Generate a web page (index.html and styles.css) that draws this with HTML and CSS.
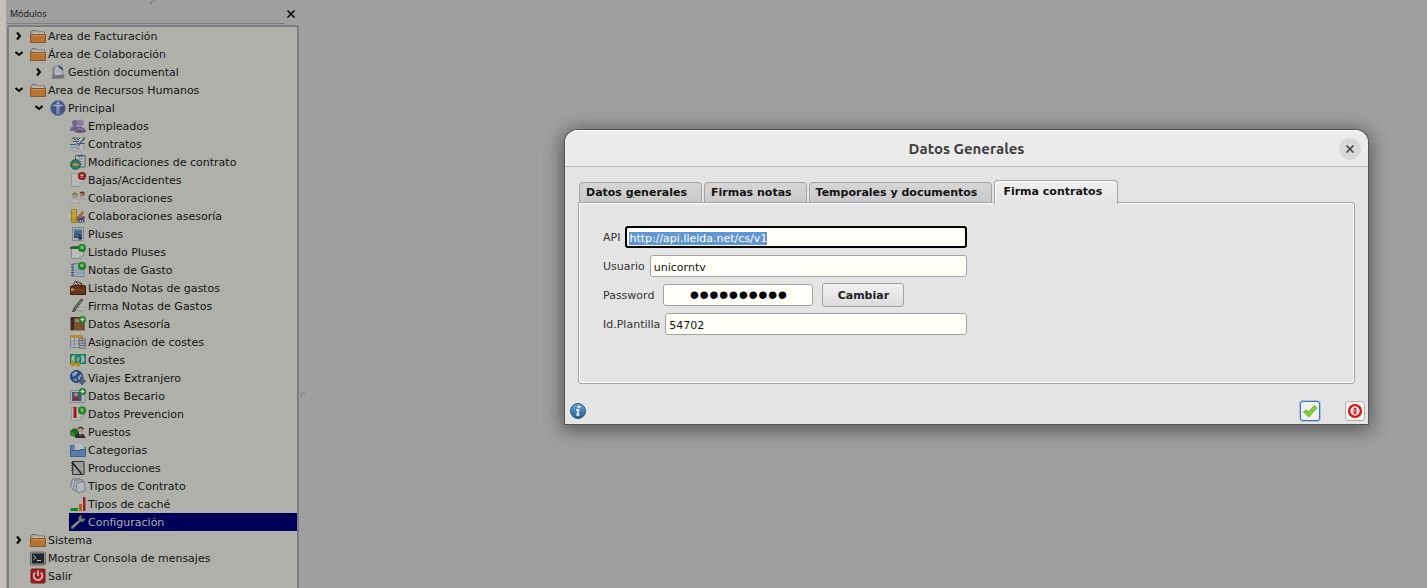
FILE: index.html
```html
<!DOCTYPE html>
<html lang="es">
<head>
<meta charset="utf-8">
<title>Datos Generales</title>
<link rel="stylesheet" href="styles.css">
</head>
<body>
<aside class="dock">
  <header class="dock-head">
    <h2 class="dock-title">Módulos</h2>
    <button class="dock-close" type="button" aria-label="Cerrar"><svg width="10" height="10" viewBox="0 0 10 10"><path d="M1.500 1.500L8.500 8.500M8.500 1.500L1.500 8.500" stroke="#000" stroke-width="1.500" fill="none"/></svg></button>
    <svg class="grip grip-top" width="6" height="6" viewBox="0 0 6 6"><path d="M1 5V2Q2 .5 5 1" stroke="#777" fill="none"/></svg>
  </header>
  <ul class="tree">
    <li>
      <div class="row"><button class="twisty" type="button" aria-label="Expandir"><svg viewBox="0 0 10 10"><path d="M3 1.500L6 5L3 8.500" class="chev"/></svg></button><button class="item" type="button"><svg viewBox="0 0 16 16"><path d="M1 13V3.500L2 2.500H6L7.500 4H14.500V7" fill="#a5a6a1" stroke="#6f706d"/><path d="M3 4.500H14V6H3z" fill="#bcbdb8"/><path d="M.5 6.500H15.500V14.500H.5z" fill="#b87435" stroke="#8f5420"/><path d="M1 7.500H15" stroke="#c98d55"/></svg>Area de Facturación</button></div>
    </li>
    <li>
      <div class="row"><button class="twisty" type="button" aria-label="Contraer"><svg viewBox="0 0 10 10"><path d="M1.500 3L5 6L8.500 3" class="chev"/></svg></button><button class="item" type="button"><svg viewBox="0 0 16 16"><path d="M1 13V3.500L2 2.500H6L7.500 4H14.500V7" fill="#a5a6a1" stroke="#6f706d"/><path d="M3 4.500H14V6H3z" fill="#bcbdb8"/><path d="M.5 6.500H15.500V14.500H.5z" fill="#b87435" stroke="#8f5420"/><path d="M1 7.500H15" stroke="#c98d55"/></svg>Área de Colaboración</button></div>
      <ul>
        <li><div class="row"><button class="twisty" type="button" aria-label="Expandir"><svg viewBox="0 0 10 10"><path d="M3 1.500L6 5L3 8.500" class="chev"/></svg></button><button class="item" type="button"><svg viewBox="0 0 16 16"><path d="M2 4L5 2.500V13H2z" fill="#8a8b8a"/><path d="M5 2L10 1L13 4V12H5z" fill="#a9afb4" stroke="#7e8283" stroke-width=".7"/><path d="M8 1.500L12.500 3.500V7L9 4z" fill="#24497c"/><circle cx="8" cy="7.500" r="3" fill="#a7b1b8" stroke="#c4c6c3"/><path d="M2 11.500L14 10.500L14.500 14.500L2 15z" fill="#747472"/></svg>Gestión documental</button></div></li>
      </ul>
    </li>
    <li>
      <div class="row"><button class="twisty" type="button" aria-label="Contraer"><svg viewBox="0 0 10 10"><path d="M1.500 3L5 6L8.500 3" class="chev"/></svg></button><button class="item" type="button"><svg viewBox="0 0 16 16"><path d="M1 13V3.500L2 2.500H6L7.500 4H14.500V7" fill="#a5a6a1" stroke="#6f706d"/><path d="M3 4.500H14V6H3z" fill="#bcbdb8"/><path d="M.5 6.500H15.500V14.500H.5z" fill="#b87435" stroke="#8f5420"/><path d="M1 7.500H15" stroke="#c98d55"/></svg>Area de Recursos Humanos</button></div>
      <ul>
        <li>
          <div class="row"><button class="twisty" type="button" aria-label="Contraer"><svg viewBox="0 0 10 10"><path d="M1.500 3L5 6L8.500 3" class="chev"/></svg></button><button class="item" type="button"><svg viewBox="0 0 16 16"><circle cx="8" cy="8" r="7.500" fill="#41528a" stroke="#75809f"/><path d="M2 6Q8 0 14 6Q9 8 2 6" fill="#6677a0"/><circle cx="8" cy="3" r="1.300" fill="#a5abbd"/><path d="M3.500 5.500H12.500M8 5V9M7 6V14M9 6V14" stroke="#a5abbd"/></svg>Principal</button></div>
          <ul>
            <li><div class="row leaf"><button class="item" type="button"><svg viewBox="0 0 16 16"><circle cx="5" cy="5" r="3" fill="#70658f"/><path d="M0 13Q0 8 5 8T9 13z" fill="#70658f"/><circle cx="10.500" cy="5" r="3.500" fill="#8b80a4"/><path d="M4.500 14Q5 9 10 9T16 14Q10 16 4.500 14" fill="#655683"/><path d="M6 12Q10 9 14 12" stroke="#9a91ad" fill="none"/></svg>Empleados</button></div></li>
            <li><div class="row leaf"><button class="item" type="button"><svg viewBox="0 0 16 16"><path d="M2 1.500H14V13L11 15H2z" fill="#b5b7b5" stroke="#91928f" stroke-width=".7"/><path d="M2 3.500L4 1.500L5 4L7 2L8 4L10 2M3 5.500H9" stroke="#45474b" fill="none"/><path d="M0 8.500H6L7 7.500H15" stroke="#216a8e" stroke-width="1.200" fill="none"/><path d="M15 1.500L8 10" stroke="#4f5357" stroke-width="1.300"/><path d="M3 12L6 10.500L7 13L10 12" stroke="#7478a6" fill="none"/></svg>Contratos</button></div></li>
            <li><div class="row leaf"><button class="item" type="button"><svg viewBox="0 0 16 16"><path d="M5.500 1.500H15V13H5.500z" fill="#b8bcc0" stroke="#52616c"/><path d="M8 .8H13V2.800H8z" fill="#485967"/><path d="M8 5H13M8 7.500H13M8 10H13" stroke="#727980"/><circle cx="5.500" cy="10.500" r="5" fill="#287562" stroke="#1d5749" stroke-width=".7"/><path d="M1.500 11L5 8.500L10 11L6 12.500z" fill="#ac9147"/></svg>Modificaciones de contrato</button></div></li>
            <li><div class="row leaf"><button class="item" type="button"><svg viewBox="0 0 16 16"><path d="M1.500 1.500H13.500V11L10 14.500H1.500z" fill="#b7b9b8" stroke="#959795"/><path d="M10 14V11H13" fill="#cacbc8" stroke="#8b8d8b" stroke-width=".7"/><circle cx="12" cy="4" r="4" fill="#8e1715"/><path d="M10.500 2.500L13.500 5.500M13.500 2.500L10.500 5.500" stroke="#c9bcb8" stroke-width="1.400"/></svg>Bajas/Accidentes</button></div></li>
            <li><div class="row leaf"><button class="item" type="button"><svg viewBox="0 0 16 16"><path d="M9 9Q9 6 12 6T16 10H9z" fill="#a9a6a3"/><circle cx="12" cy="4" r="2.500" fill="#9a765e"/><path d="M9.500 3Q12 0 14.500 3V5L13 3z" fill="#482d20"/><circle cx="5" cy="5.500" r="3" fill="#aa8e78"/><path d="M2 5Q4 0 8 5L5 4z" fill="#75604e"/><path d="M0 13Q1 9 5 9T10.500 13z" fill="#babab8" stroke="#989896" stroke-width=".6"/></svg>Colaboraciones</button></div></li>
            <li><div class="row leaf"><button class="item" type="button"><svg viewBox="0 0 16 16"><path d="M6 10L12.500 3L14 5L8 13z" fill="#9a6546"/><path d="M6 12L14 8L15 10L8 14z" fill="#5a3c61"/><path d="M6 11H14.500V14.500H6z" fill="#40536c"/><path d="M8 12V14M10.500 12V14M12.500 12V14" stroke="#a9acad"/><path d="M1.500 1.500H6.500V14.500H1.500z" fill="#b79b2d" stroke="#978026"/><path d="M2 3H6M2 8H6" stroke="#c9b765"/></svg>Colaboraciones asesoría</button></div></li>
            <li><div class="row leaf"><button class="item" type="button"><svg viewBox="0 0 16 16"><path d="M2.500 1.500H13.500V14.500H2.500z" fill="#a6abad" stroke="#81888c"/><path d="M4 3.500H12V11H4z" fill="#506e91"/><path d="M4 9L7 6L12 10V12H4z" fill="#3c587b"/><path d="M10 8V14M8.500 12.500H12" stroke="#252f42" stroke-width="1.300"/></svg>Pluses</button></div></li>
            <li><div class="row leaf"><button class="item" type="button"><svg viewBox="0 0 16 16"><path d="M1.500 4.500H13.500V12L11 14.500H1.500z" fill="#bcbebb" stroke="#868985"/><path d="M0 5V3Q3 1.500 8 2V5z" fill="#19652a"/><circle cx="12" cy="4" r="4" fill="#168021"/><circle cx="12" cy="3.500" r="2" fill="#77b67b"/><path d="M10 14V12H13" stroke="#979996" fill="none"/></svg>Listado Pluses</button></div></li>
            <li><div class="row leaf"><button class="item" type="button"><svg viewBox="0 0 16 16"><path d="M2.500 1.500H14V14.500H2.500z" fill="#9aabb9" stroke="#748797"/><path d="M1 3H4M1 5.500H4M1 8H4M1 10.500H4M1 13H4" stroke="#3f4b55"/><path d="M5 8H13M5 11H13" stroke="#8499ab"/><circle cx="12" cy="4" r="4" fill="#168021"/><circle cx="12" cy="3.500" r="2" fill="#77b67b"/></svg>Notas de Gasto</button></div></li>
            <li><div class="row leaf"><button class="item" type="button"><svg viewBox="0 0 16 16"><path d="M3 6L5 1L11 3L13 7z" fill="#b5b7b3" stroke="#333" stroke-width=".8"/><path d="M6 2L10 6M5 4L7 6M9 2L12 5" stroke="#292a28"/><path d="M.5 6.500Q8 4 15.500 6V14.500H.5z" fill="#64371c" stroke="#40210f"/><path d="M1 11Q8 8 15 11" stroke="#83502f" fill="none"/><path d="M1 8.500H4V10.500H1z" fill="#bc9834"/></svg>Listado Notas de gastos</button></div></li>
            <li><div class="row leaf"><button class="item" type="button"><svg viewBox="0 0 16 16"><path d="M3 12Q11 7 15.500 10.500L12 14H10L12 12H3z" fill="#babcb8" stroke="#858783" stroke-width=".6"/><path d="M11 1L13 2L5 12L3 12.500L4 10z" fill="#707861" stroke="#33362f" stroke-width=".8"/><path d="M2 13.500Q5 14 6 12" stroke="#40423e" fill="none"/></svg>Firma Notas de Gastos</button></div></li>
            <li><div class="row leaf"><button class="item" type="button"><svg viewBox="0 0 16 16"><path d="M1 1.500H14V14.500H1z" fill="#795330" stroke="#443020"/><path d="M1 2H4V14H1z" fill="#372b22"/><path d="M5 3H11V6H5z" fill="#9b866f"/><path d="M1 14.500H14" stroke="#9a8264"/><circle cx="12.500" cy="3.500" r="3.500" fill="#158022"/><path d="M10.500 3.500H14.500M12.500 1.500V5.500" stroke="#c9d4c7" stroke-width="1.300"/></svg>Datos Asesoría</button></div></li>
            <li><div class="row leaf"><button class="item" type="button"><svg viewBox="0 0 16 16"><path d="M.5 1.500H12.500V13.500H.5z" fill="#b8bbc0" stroke="#7c8289"/><path d="M.5 1H12.500V4H.5z" fill="#b98b29"/><path d="M1 7H12M1 10H12M4.500 4V13M8.500 4V13" stroke="#7e8b99"/><path d="M9.500 4.500H15.500V14.500H9.500z" fill="#a1a4a6" stroke="#747a80"/><path d="M10.500 6.500H14.500M10.500 9H15M10.500 11.500H15" stroke="#515961"/></svg>Asignación de costes</button></div></li>
            <li><div class="row leaf"><button class="item" type="button"><svg viewBox="0 0 16 16"><path d="M0 2H16V12H0z" fill="#16806a"/><path d="M3 3.500H13L14.500 5V9L13 10.500H3L1.500 9V5z" fill="#a9b6a9"/><ellipse cx="8" cy="7" rx="3.500" ry="4.500" fill="#16806a"/><ellipse cx="8" cy="7" rx="1" ry="2" fill="none" stroke="#b4bdb1"/><path d="M1 9Q3 7.500 5 9V14Q3 15 1 13.500zM6 11Q8 9.500 10 11V14Q8 15 6 14z" fill="#b78d26"/></svg>Costes</button></div></li>
            <li><div class="row leaf"><button class="item" type="button"><svg viewBox="0 0 16 16"><circle cx="6.500" cy="6.500" r="6" fill="#284d87" stroke="#203b65"/><path d="M2 4L5 1.500L8 2L6 5L3 7zM8 7L11 4L12 6L10 10L8 9zM3 10L6 8L7 11z" fill="#91a4b8"/><path d="M10.500 7H13.500V10.500H16L12 15L8 10.500H10.500z" fill="#4c637f" stroke="#33496a" stroke-width=".6"/></svg>Viajes Extranjero</button></div></li>
            <li><div class="row leaf"><button class="item" type="button"><svg viewBox="0 0 16 16"><path d="M.5 2.500H15V14.500H.5z" fill="#b1b5b9" stroke="#82888e"/><path d="M2 4H11.500V13H2z" fill="#3b587e"/><circle cx="6" cy="6.500" r="2" fill="#af8468"/><path d="M3 12.500Q3 9 6 9T9 12.500z" fill="#872d25"/><circle cx="12.500" cy="3.500" r="3.500" fill="#158022"/><path d="M10.500 3.500H14.500M12.500 1.500V5.500" stroke="#c9d4c7" stroke-width="1.300"/></svg>Datos Becario</button></div></li>
            <li><div class="row leaf"><button class="item" type="button"><svg viewBox="0 0 16 16"><path d="M1.500 1.500H13.500V11L10 14.500H1.500z" fill="#b9bbb9" stroke="#969895"/><path d="M3.500 1H6.500V12H3.500z" fill="#a31519"/><path d="M10 14V11H13" stroke="#939591" fill="none"/><circle cx="12" cy="4.500" r="4" fill="#168021"/><path d="M12 2V7M10 4H14" stroke="#77b67b" stroke-width="1.500"/></svg>Datos Prevencion</button></div></li>
            <li><div class="row leaf"><button class="item" type="button"><svg viewBox="0 0 16 16"><path d="M0 7L4 4L9 6V11L5 13L0 11z" fill="#24651c"/><path d="M0 7L5 9V13L0 11z" fill="#32832b"/><circle cx="10.500" cy="5.500" r="2.800" fill="#b19784"/><path d="M7.500 5Q9 1 13.500 4V6L11 4z" fill="#332b28"/><path d="M5 14Q6 9 10 9T15.500 14z" fill="#292b32"/><path d="M9 9H12L10.500 13z" fill="#bebebb"/><path d="M10.500 10V13" stroke="#972a25"/></svg>Puestos</button></div></li>
            <li><div class="row leaf"><button class="item" type="button"><svg viewBox="0 0 16 16"><path d="M.5 3.500H4L6 5.500H15.500V13H.5z" fill="#6482a0" stroke="#47658a"/><path d="M5 2L11 .8L14 4V8H5z" fill="#b8bdc1" stroke="#9da3a8" stroke-width=".6"/><path d="M.5 8.500H9L11 7.500H15.500V14.500H.5z" fill="#5c7da2" stroke="#3c5e87"/></svg>Categorias</button></div></li>
            <li><div class="row leaf"><button class="item" type="button"><svg viewBox="0 0 16 16"><path d="M2.500 1.500H14V14.500H2.500z" fill="#9b9d9c" stroke="#303232"/><path d="M1 3H4M1 5.500H4M1 8H4M1 10.500H4" stroke="#474948"/><path d="M2 2L10 12L11.500 14" stroke="#222423" stroke-width="1.500"/></svg>Producciones</button></div></li>
            <li><div class="row leaf"><button class="item" type="button"><svg viewBox="0 0 16 16"><g fill="#b6b7ba" stroke="#66677d" stroke-width=".8"><path d="M2.500 1L10 .8V9L2.500 11L.5 9z"/><path d="M5 2.500L12 1.500L13 11L5 13L3 11z"/><path d="M7 4.500L14 3.500L15.500 12L9 15L6 12z"/></g></svg>Tipos de Contrato</button></div></li>
            <li><div class="row leaf"><button class="item" type="button"><svg viewBox="0 0 16 16"><path d="M.5 12H8V15H.5z" fill="#118824"/><path d="M9 8H12V15H9z" fill="#a3651e"/><path d="M13 1H15.500V15H13z" fill="#a91b18"/></svg>Tipos de caché</button></div></li>
            <li><div class="row leaf"><button class="item selected" type="button"><svg viewBox="0 0 16 16"><path d="M1.500 14.500Q0 13 1.500 12L8.500 6.500Q8 3 10 1.500L12.500 1L11 3L12.500 5L15 4V6Q13.500 8.500 10 8L4 14Q3 15.500 1.500 14.500z" fill="#777b7b" stroke="#343a43" stroke-width=".8"/><path d="M3 12.500L9 7" stroke="#a9abac"/></svg>Configuración</button></div></li>
          </ul>
        </li>
      </ul>
    </li>
    <li>
      <div class="row"><button class="twisty" type="button" aria-label="Expandir"><svg viewBox="0 0 10 10"><path d="M3 1.500L6 5L3 8.500" class="chev"/></svg></button><button class="item" type="button"><svg viewBox="0 0 16 16"><path d="M1 13V3.500L2 2.500H6L7.500 4H14.500V7" fill="#a5a6a1" stroke="#6f706d"/><path d="M3 4.500H14V6H3z" fill="#bcbdb8"/><path d="M.5 6.500H15.500V14.500H.5z" fill="#b87435" stroke="#8f5420"/><path d="M1 7.500H15" stroke="#c98d55"/></svg>Sistema</button></div>
    </li>
    <li><div class="row leaf"><button class="item" type="button"><svg viewBox="0 0 16 16"><rect x=".5" y="2" width="15" height="13" rx="1" fill="#8d8f8d" stroke="#686a68"/><path d="M2 3.500H14V13.500H2z" fill="#202528"/><path d="M3.500 5.500L6 7.500L3.500 9.500M7 10.500H11" stroke="#c0c4c0" fill="none"/></svg>Mostrar Consola de mensajes</button></div></li>
    <li><div class="row leaf"><button class="item" type="button"><svg viewBox="0 0 16 16"><rect x="1" y="1" width="14" height="14" rx="1" fill="#a5191c" stroke="#76191a"/><path d="M5.200 4.500A4.300 4.300 0 1 0 10.800 4.500" stroke="#c1bbb8" stroke-width="1.800" fill="none"/><path d="M8 2.500V8" stroke="#c1bbb8" stroke-width="1.800"/></svg>Salir</button></div></li>
  </ul>
  <svg class="grip grip-side" width="6" height="6" viewBox="0 0 6 6"><path d="M1 5V2Q2 .5 5 1" stroke="#777" fill="none"/></svg>
</aside>

<main class="desk">
  <section class="dialog" role="dialog" aria-labelledby="dlg-title">
    <header class="dialog-head">
      <h1 class="dialog-title" id="dlg-title">Datos Generales</h1>
      <button class="dialog-close" type="button" aria-label="Cerrar"><svg width="10" height="10" viewBox="0 0 10 10"><path d="M1.500 1.500L8.500 8.500M8.500 1.500L1.500 8.500" stroke="#3d3d3d" stroke-width="1.500" fill="none"/></svg></button>
    </header>
    <div class="dialog-body">
      <div class="tabs" role="tablist">
        <button class="tab" type="button" role="tab">Datos <u>g</u>enerales</button>
        <button class="tab" type="button" role="tab">Firmas notas</button>
        <button class="tab" type="button" role="tab">Temporales y documentos</button>
        <button class="tab active" type="button" role="tab" aria-selected="true">Firma contratos</button>
      </div>
      <form class="panel" role="tabpanel">
        <div class="field"><label for="api">API</label><input id="api" type="text" value="http://api.lleida.net/cs/v1" autofocus></div>
        <div class="field"><label for="usuario">Usuario</label><input id="usuario" type="text" value="unicorntv"></div>
        <div class="field field-pass"><label for="pass">Password</label><input id="pass" class="pass" type="password" value="contratos1"><button class="change" type="button">Cambiar</button></div>
        <div class="field"><label for="plantilla">Id.Plantilla</label><input id="plantilla" type="text" value="54702"></div>
      </form>
      <footer class="actions">
        <button class="info" type="button" aria-label="Información"><svg width="16" height="16" viewBox="0 0 16 16"><defs><linearGradient id="blue" x2="0" y2="1"><stop stop-color="#6ea3d8"/><stop offset="1" stop-color="#1f6094"/></linearGradient></defs><circle cx="8" cy="8" r="7.500" fill="url(#blue)" stroke="#27598a"/><circle cx="9" cy="4" r="1.300" fill="#fff"/><path d="M6 7H8.500L7.200 12H9.500" stroke="#fff" stroke-width="1.600" fill="none"/></svg></button>
        <button class="act accept" type="button" aria-label="Aceptar"><svg width="16" height="16" viewBox="0 0 16 16"><path d="M1.500 9L4 6.800L6.500 9L12.500 2.500L14.800 4.800L6.800 14z" fill="#7ccb25" stroke="#5da51b" stroke-width=".8"/><path d="M3 9L6.500 11.500L13.500 4" stroke="#a2df59" fill="none"/></svg></button>
        <button class="act" type="button" aria-label="Cancelar"><svg width="16" height="16" viewBox="0 0 16 16"><circle cx="8" cy="8" r="5.900" fill="#f4eded" stroke="#d81416" stroke-width="2.400"/><rect x="6.500" y="4.800" width="3" height="6.400" rx="1.200" fill="#d81416"/><path d="M8 6V10" stroke="#eec0c0" stroke-width=".8"/></svg></button>
      </footer>
    </div>
  </section>
</main>
<script src="main.js"></script>
</body>
</html>
```
FILE: styles.css
```css
* {
  box-sizing: border-box;
}

body {
  margin: 0;
  height: 100vh;
  display: flex;
  overflow: hidden;
  background: #9f9f9f;
  font-family: "DejaVu Sans", Verdana, sans-serif;
  font-size: 11px;
  line-height: 15px;
  color: #141414;
}

button,
input {
  font: inherit;
  color: inherit;
}

button {
  padding: 0;
  border: 0;
  background: none;
}

svg {
  display: block;
  flex: none;
}

/* Module tree */
.dock {
  position: relative;
  flex: none;
  display: flex;
  flex-direction: column;
  width: 299px;
  border-left: 6px solid #c5c1bb;
  background: #9f9f9f;
}

.dock-head {
  display: flex;
  align-items: center;
  justify-content: space-between;
  height: 25px;
  padding: 3px 3px 0 4px;
  background: linear-gradient(#7d7d7d, #7d7d7d) 1px 23px / calc(100% - 16px) 1px no-repeat;
}

.dock-title {
  margin: 0;
  font-family: "Open Sans", "Noto Sans", sans-serif;
  font-size: 9px;
  font-weight: 400;
  line-height: 12px;
}

.grip {
  position: absolute;
}

.grip-top {
  top: 0;
  left: 144px;
}

.grip-side {
  top: 392px;
  right: -7px;
}

.tree {
  flex: 1;
  margin: 0 0 0 1px;
  padding: 0;
  list-style: none;
  border: 2px solid #7c7d7f;
  border-bottom: 0;
  border-radius: 3px 3px 0 0;
  background: #afb0aa;
}

.tree ul {
  margin: 0;
  padding: 0 0 0 20px;
  list-style: none;
}

.row {
  display: flex;
  height: 18px;
}

.twisty {
  display: grid;
  place-items: center;
  width: 20px;
}

.twisty svg {
  width: 10px;
  height: 10px;
}

.chev {
  fill: none;
  stroke: #000;
  stroke-width: 2;
}

.leaf {
  padding-left: 20px;
}

.item {
  flex: 1;
  display: flex;
  align-items: center;
  gap: 2px;
  padding-left: 1px;
  text-align: left;
  white-space: nowrap;
}

.item svg {
  width: 16px;
  height: 16px;
}

.item.selected {
  background: #00005a;
  color: #afb0aa;
}

/* Dialog window over the desktop */
.desk {
  flex: 1;
}

.dialog {
  position: absolute;
  top: 130px;
  left: 565px;
  right: 59px;
  border-radius: 13px 13px 0 0;
  background: #e4e4e4;
  box-shadow: 0 0 0 1px #555, 0 3px 18px 4px rgba(0, 0, 0, 0.42);
}

.dialog-head {
  display: grid;
  grid-template-columns: 1fr auto 1fr;
  align-items: center;
  height: 37px;
  padding: 0 7px;
  border-top: 1px solid #fff;
  border-bottom: 1px solid #bcbcbc;
  border-radius: 13px 13px 0 0;
  background: #ebebeb;
}

.dialog-title {
  grid-column: 2;
  margin: 0;
  font-family: Ubuntu, "Noto Sans", sans-serif;
  font-size: 15px;
  font-weight: 700;
  line-height: 20px;
  color: #3d3d3d;
}

.dialog-close {
  justify-self: end;
  display: grid;
  place-items: center;
  width: 22px;
  height: 22px;
  border-radius: 50%;
  background: #d8d8d8;
}

.dialog-body {
  padding: 13px 3px 3px 5px;
}

.tabs {
  position: relative;
  display: flex;
  align-items: flex-end;
  gap: 2px;
  margin: 0 10px -1px 9px;
}

.tab {
  height: 21px;
  padding: 0 14px 0 6px;
  border: 1px solid #a3a3a3;
  border-radius: 4px 4px 0 0;
  background: linear-gradient(#d6d6d6, #c9c9c9);
  font-weight: 700;
}

.tab.active {
  height: 24px;
  margin-bottom: -1px;
  padding: 0 15px 3px 8px;
  border-bottom: 0;
  background: linear-gradient(#f0f0f0, #e4e4e4);
  box-shadow: inset 1px 1px #fff;
}

.panel {
  display: flex;
  flex-direction: column;
  gap: 7px;
  margin: 0 10px 0 8px;
  padding: 23px 24px 48px;
  border: 1px solid #a3a3a3;
  border-radius: 0 3px 3px 3px;
  box-shadow: inset 0 0 0 1px #fff;
}

.field {
  display: flex;
  align-items: center;
  gap: 5px;
  width: 364px;
  max-width: 100%;
  height: 22px;
  color: #333;
}

.field-pass {
  gap: 9px;
}

.field input {
  flex: 1;
  min-width: 0;
  height: 22px;
  padding: 2px 3px 0;
  border: 1px solid #a3a3a3;
  border-radius: 3px;
  outline: 0;
  background: #fffff8;
  color: #141414;
}

.field input:focus {
  border: 2px solid #000;
  padding: 2px 2px 0;
}

.field input::selection {
  background: rgba(93, 149, 210, 0.99);
  color: #fff;
}

.field .pass {
  flex: none;
  width: 150px;
  padding-top: 0;
  font-family: "Liberation Sans", Arial, sans-serif;
  font-size: 28px;
  text-align: center;
  color: #000;
}

.change {
  width: 82px;
  height: 24px;
  border: 1px solid #a3a3a3;
  border-radius: 3px;
  background: linear-gradient(#f1f1f1, #dcdcdc);
  font-weight: 700;
  color: #222;
}

.actions {
  display: flex;
  align-items: center;
  gap: 25px;
  margin-top: 17px;
}

.info {
  margin-right: auto;
}

.act {
  display: grid;
  place-items: center;
  width: 20px;
  height: 20px;
  border: 1px solid #b0b0b0;
  border-radius: 3px;
  background: #f0f0f0;
}

.accept {
  border-color: #3d74ad;
  box-shadow: 0 0 0 1px #a9c3de;
}
```
FILE: main.js
```js
const api = document.getElementById("api");
api.focus();
api.select();
```
